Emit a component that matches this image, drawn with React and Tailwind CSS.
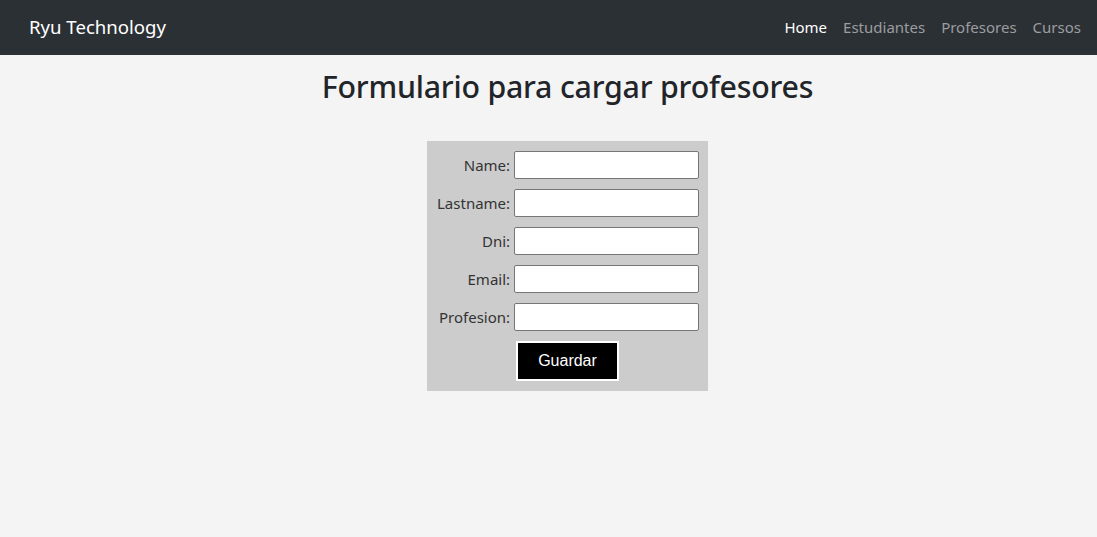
const fields = ['Name', 'Lastname', 'Dni', 'Email', 'Profesion'];

// ── Navbar ────────────────────────────────────────────────────────────────────
const Navbar = () => (
    <nav className="h-[55px] bg-[#2b3035] flex items-center justify-between pl-[29px] pr-4">
        <a className="text-[18.6px] text-white leading-none">Ryu Technology</a>
        <ul className="flex items-center text-[15px] leading-none">
            <li className="px-2 text-white">Home</li>
            <li className="px-2 text-[#9b9d9f]">Estudiantes</li>
            <li className="px-2 text-[#9b9d9f]">Profesores</li>
            <li className="pl-2 text-[#9b9d9f]">Cursos</li>
        </ul>
    </nav>
);

export default function App() {
    return (
        <div className="min-h-[537px] bg-[#f4f4f4] font-['Noto_Sans',sans-serif] text-[#212529]">
            <Navbar />
            <main className="pl-[38px]">
                <h1 className="text-center text-[30.3px] font-medium leading-none pt-[17px] tracking-[-0.2px]">
                    Formulario para cargar profesores
                </h1>
                <div className="flex justify-center mt-[39px]">
                    <form className="bg-[#cccccc] p-[10px] w-[281px]">
                        <div className="grid grid-cols-[auto_185px] gap-x-[4px] gap-y-[10px] items-center">
                            {fields.map((f) => (
                                <div key={f} className="contents">
                                    <label className="text-right text-[15px] text-[#333]">{f}:</label>
                                    <input
                                        type="text"
                                        className="h-[28px] w-[185px] bg-white border border-[#767676] rounded-[2px]"
                                    />
                                </div>
                            ))}
                        </div>
                        <div className="flex justify-center mt-[10px]">
                            <button
                                type="button"
                                className="w-[103px] h-[40px] bg-black text-white border-2 border-white font-['Liberation_Sans',sans-serif] text-[16px]"
                            >
                                Guardar
                            </button>
                        </div>
                    </form>
                </div>
            </main>
        </div>
    );
}
